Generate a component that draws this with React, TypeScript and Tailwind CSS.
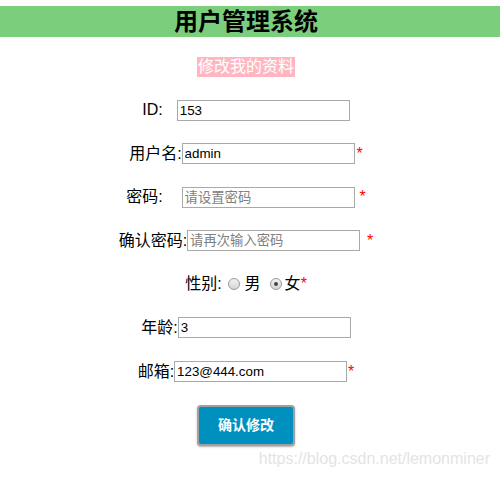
import React from 'react';

const FONT = { fontFamily: '"Liberation Sans", "Noto Sans CJK SC", sans-serif' };

function Star({ className = '' }: { className?: string }) {
  return <span className={`text-[16px] leading-none text-[#ff0000] ${className}`}>*</span>;
}

function TextInput({ value, placeholder }: { value?: string; placeholder?: string }) {
  return (
    <input
      readOnly
      defaultValue={value}
      placeholder={placeholder}
      className="h-[21px] w-[173px] border border-[#a9a9a9] bg-white px-[2px] text-[13.33px] text-black outline-none placeholder:text-[#808080]"
      style={FONT}
    />
  );
}

function Radio({ checked }: { checked?: boolean }) {
  return (
    <span className="flex h-[12px] w-[12px] items-center justify-center rounded-full border border-[#9a9a9a] bg-gradient-to-b from-[#f2f2f2] to-[#d6d6d6]">
      {checked && <span className="h-[4px] w-[4px] rounded-full bg-[#444]" />}
    </span>
  );
}

export default function App() {
  return (
    <div className="relative h-[478px] w-[500px] bg-white text-black" style={FONT}>
      <div className="h-[6px]" />
      {/* Header */}
      <div className="flex h-[31px] w-full items-center justify-center bg-[#7bce7b] pr-[8px]">
        <h1 className="text-[24px] font-bold leading-none">用户管理系统</h1>
      </div>

      <div className="flex w-[492px] flex-col items-center">
        <div className="mt-[20px] bg-[#ffb6c1] px-[1px] text-[16px] leading-[20px] text-white">修改我的资料</div>

        <div className="mt-[23px] flex w-full flex-col items-center gap-[23.6px] text-[16px]">
          {/* ID */}
          <div className="flex h-[20px] items-center">
            <span>ID:</span>
            <span className="ml-[14px]"><TextInput value="153" /></span>
          </div>
          {/* 用户名 */}
          <div className="flex h-[20px] items-center">
            <span>用户名:</span>
            <TextInput value="admin" />
            <Star className="ml-[2px]" />
          </div>
          {/* 密码 */}
          <div className="flex h-[20px] items-center">
            <span>密码:</span>
            <span className="ml-[19px]"><TextInput placeholder="请设置密码" /></span>
            <Star className="ml-[5px]" />
          </div>
          {/* 确认密码 */}
          <div className="flex h-[20px] items-center">
            <span>确认密码:</span>
            <TextInput placeholder="请再次输入密码" />
            <Star className="ml-[7px]" />
          </div>
          {/* 性别 */}
          <div className="flex h-[20px] items-center">
            <span>性别:</span>
            <span className="ml-[6px]"><Radio /></span>
            <span className="ml-[5px]">男</span>
            <span className="ml-[9px]"><Radio checked /></span>
            <span className="ml-[3px]">女</span>
            <Star />
          </div>
          {/* 年龄 */}
          <div className="flex h-[20px] items-center">
            <span>年龄:</span>
            <TextInput value="3" />
          </div>
          {/* 邮箱 */}
          <div className="flex h-[20px] items-center">
            <span>邮箱:</span>
            <TextInput value="123@444.com" />
            <Star className="ml-[1px]" />
          </div>
        </div>

        <button className="mt-[23px] h-[41px] w-[98px] rounded-[4px] border-2 border-[#a0a0a0] bg-[#0090bf] text-[14px] font-bold text-white shadow-[0_1px_2px_rgba(0,0,0,0.3)]">
          确认修改
        </button>
      </div>

      <div className="absolute bottom-[7px] right-[10px] text-[16px] text-[#e4e4e4]">https://blog.csdn.net/lemonminer</div>
    </div>
  );
}
